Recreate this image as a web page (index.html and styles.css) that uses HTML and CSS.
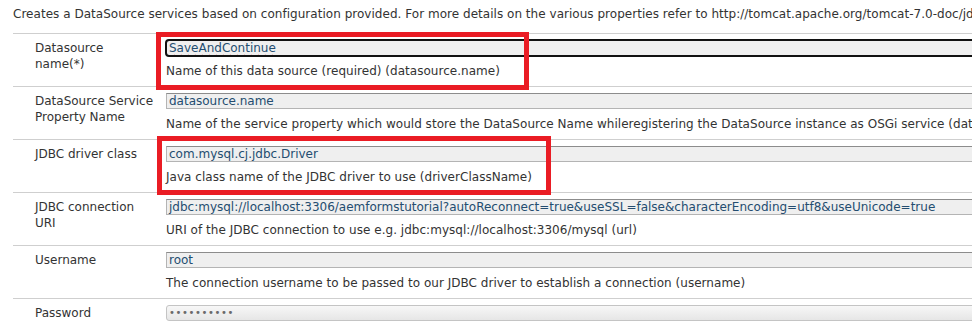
FILE: index.html
```html
<!DOCTYPE html>
<html>
<head>
<meta charset="utf-8">
<link rel="stylesheet" href="styles.css">
</head>
<body>
<div class="page">
  <p class="intro">Creates a DataSource services based on configuration provided. For more details on the various properties refer to http://tomcat.apache.org/tomcat-7.0-doc/jdbc-pool.html</p>
  <div class="form">
    <div class="row">
      <div class="label">Datasource<br>name(*)</div>
      <div class="value">
        <div class="field focused"><span class="misspelled">SaveAndContinue</span></div>
        <div class="desc">Name of this data source (required) (datasource.name)</div>
      </div>
    </div>
    <div class="row">
      <div class="label">DataSource Service<br>Property Name</div>
      <div class="value">
        <div class="field">datasource.name</div>
        <div class="desc">Name of the service property which would store the DataSource Name whileregistering the DataSource instance as OSGi service (datasource.svc.prop.name)</div>
      </div>
    </div>
    <div class="row">
      <div class="label">JDBC driver class</div>
      <div class="value">
        <div class="field">com.mysql.cj.jdbc.Driver</div>
        <div class="desc">Java class name of the JDBC driver to use (driverClassName)</div>
      </div>
    </div>
    <div class="row">
      <div class="label">JDBC connection<br>URI</div>
      <div class="value">
        <div class="field">jdbc:mysql://localhost:3306/aemformstutorial?autoReconnect=true&amp;useSSL=false&amp;characterEncoding=utf8&amp;useUnicode=true</div>
        <div class="desc">URI of the JDBC connection to use e.g. jdbc:mysql://localhost:3306/mysql (url)</div>
      </div>
    </div>
    <div class="row">
      <div class="label">Username</div>
      <div class="value">
        <div class="field">root</div>
        <div class="desc">The connection username to be passed to our JDBC driver to establish a connection (username)</div>
      </div>
    </div>
    <div class="row">
      <div class="label">Password</div>
      <div class="value">
        <div class="field password">••••••••••</div>
        <div class="desc">The connection password to be passed to our JDBC driver to establish a connection (password)</div>
      </div>
    </div>
  </div>
  <div class="mark mark-one"></div>
  <div class="mark mark-two"></div>
</div>
</body>
</html>
```

FILE: styles.css
```css
html, body {
  margin: 0;
  padding: 0;
  background: #fff;
  overflow: hidden;
}
.page {
  position: relative;
  width: 1400px;
  padding-left: 13px;
  font-family: "DejaVu Sans", Verdana, sans-serif;
  font-size: 12px;
  color: #333;
}
.intro {
  margin: 0;
  padding-top: 6px;
  height: 27px;
  line-height: 16px;
  white-space: nowrap;
  letter-spacing: 0.03px;
}
.form {
  width: 1380px;
}
.row {
  display: grid;
  grid-template-columns: 153px 1fr;
  border-top: 1px solid #cfcfcf;
  height: 52px;
}
.label {
  padding: 6px 0 0 22px;
  line-height: 16px;
}
.value {
  padding-top: 6px;
}
.field {
  box-sizing: border-box;
  height: 16px;
  width: 820px;
  border: 1px solid #b4b4b4;
  border-top-color: #8c8c8c;
  background: #efefef;
  color: #244d70;
  line-height: 14px;
  padding-left: 2px;
  white-space: nowrap;
  overflow: hidden;
}
.field.focused {
  outline: 2px solid #111;
  outline-offset: -1px;
  border-radius: 3px;
  width: 1000px;
}
.field.password {
  border-radius: 3px;
  border-color: #c4c4c4;
  background: linear-gradient(#f7f7f7, #e6e6e6);
  color: #6a6a6a;
  font-size: 10px;
  letter-spacing: 0.6px;
}
.misspelled {
  text-decoration: underline wavy #e33;
  text-decoration-thickness: 1px;
  text-underline-offset: 2px;
}
.desc {
  margin-top: 7px;
  line-height: 16px;
  white-space: nowrap;
  letter-spacing: 0.03px;
}
.mark {
  position: absolute;
  border: 5px solid #ea1c24;
  box-sizing: border-box;
}
.mark-one {
  left: 156px;
  top: 32px;
  width: 373px;
  height: 58px;
}
.mark-two {
  left: 157px;
  top: 136px;
  width: 394px;
  height: 59px;
}
```
